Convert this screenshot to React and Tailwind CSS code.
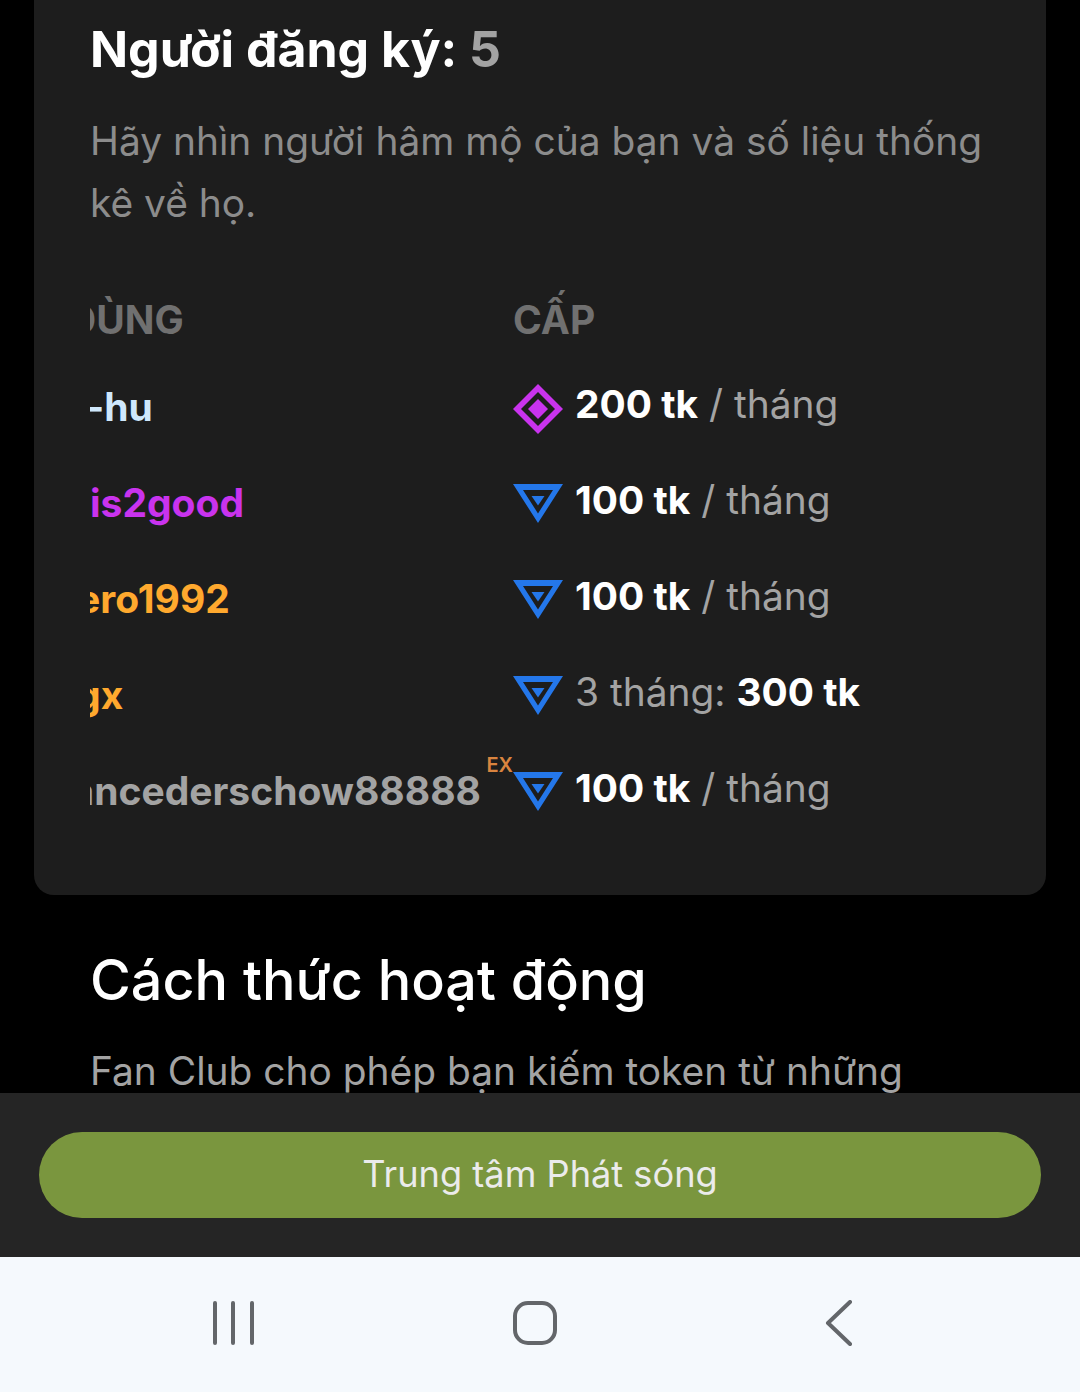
const rows = [
  { name: '-hu', color: 'text-[#cfe8fc]', shift: '-ml-[4px]', tier: 'diamond' },
  { name: 'is2good', color: 'text-[#c933ee]', shift: 'ml-0', tier: 'tri' },
  { name: 'ero1992', color: 'text-[#ffa92e]', shift: '-ml-[13px]', tier: 'tri' },
  { name: 'gx', color: 'text-[#ffa92e]', shift: '-ml-[14px]', tier: 'tri3' },
  { name: 'lancederschow88888', color: 'text-[#a3a3a3]', shift: '-ml-[29px]', tier: 'tri', ex: true },
]

function Diamond() {
  return (
    <svg width="50" height="50" viewBox="0 0 50 50" className="shrink-0 mt-[10px]">
      <path fillRule="evenodd" d="M25 0 50 25 25 50 0 25ZM25 8 8 25 25 42 42 25Z" fill="#c933ee" />
      <path d="M25 15 35 25 25 35 15 25Z" fill="#c933ee" />
    </svg>
  )
}

function Triangle() {
  return (
    <svg width="50" height="40" viewBox="0 0 50 40" className="shrink-0 mt-[7px]">
      <path fillRule="evenodd" d="M0 0H50L25 39ZM10 6 25 29.500 40 6Z" fill="#2477ea" />
      <path d="M18.500 12H31.500L25 21.500Z" fill="#2477ea" />
    </svg>
  )
}

function Price({ row }) {
  if (row.tier === 'tri3') {
    return (
      <span className="text-[38.900px] text-[#a3a3a3]">
        3 tháng: <b className="font-bold text-white">300 tk</b>
      </span>
    )
  }
  return (
    <span className="text-[38.900px] text-[#a3a3a3] pt-px">
      <b className="font-bold text-white">{row.tier === 'diamond' ? '200' : '100'} tk</b> / tháng
    </span>
  )
}

export default function App() {
  return (
    <div className="h-[1392px] flex flex-col bg-black overflow-hidden font-['Inter',sans-serif]">
      <div className="flex-1 overflow-hidden">
        <div className="mx-[34px] h-[895px] bg-[#1d1d1d] rounded-b-[20px] pl-[56px] pr-[50px] pt-[16px]">
          <h1 className="text-[50px] leading-[66px] font-bold text-white">
            Người đăng ký: <span className="text-[#a3a3a3]">5</span>
          </h1>
          <p className="mt-[28px] text-[38.900px] leading-[62px] text-[#8c8c8c] w-[910px]">
            Hãy nhìn người hâm mộ của bạn và số liệu thống kê về họ.
          </p>
          <div className="mt-[55px] mb-[5px] flex h-[62px] items-center text-[39px] font-bold text-[#707070]">
            <div className="w-[423px] overflow-hidden whitespace-nowrap">
              <span className="block -ml-[160px]">NGƯỜI DÙNG</span>
            </div>
            <div>CẤP</div>
          </div>
          {rows.map(row => (
            <div key={row.name} className="flex h-[96px] items-center">
              <div className="relative w-[423px]">
                <div className="w-[392px] overflow-hidden whitespace-nowrap text-[39px] font-bold pt-[6px]">
                  <span className={`block ${row.shift} ${row.color}`}>{row.name}</span>
                </div>
                {row.ex && (
                  <span className="absolute right-0 -top-[6px] text-[20px] font-semibold text-[#d9843f]">EX</span>
                )}
              </div>
              <div className="w-[62px] flex">
                {row.tier === 'diamond' ? <Diamond /> : <Triangle />}
              </div>
              <Price row={row} />
            </div>
          ))}
        </div>
        <div className="px-[90px] pt-[49px]">
          <h2 className="text-[55.700px] leading-[72px] font-medium text-white">Cách thức hoạt động</h2>
          <p className="mt-[24px] text-[38.900px] leading-[62px] text-[#a3a3a3]">
            Fan Club cho phép bạn kiếm token từ những
          </p>
        </div>
      </div>
      <div className="h-[164px] shrink-0 bg-[#252525] px-[39px] pt-[39px]">
        <button className="w-full h-[86px] rounded-full bg-[#7a963e] pb-[2px] text-[36.200px] text-[#ebebeb]">
          Trung tâm Phát sóng
        </button>
      </div>
      <div className="h-[135px] shrink-0 bg-[#f5f9fd] flex items-center pl-[211px] pb-[4px]">
        <svg width="44" height="46" viewBox="0 0 44 46" fill="none" stroke="#63666a" strokeWidth="4" strokeLinecap="round">
          <path d="M4 3V43M22 3V43M41 3V43" />
        </svg>
        <svg width="46" height="46" viewBox="0 0 46 46" fill="none" stroke="#63666a" strokeWidth="4" className="ml-[257px]">
          <rect x="3" y="3" width="40" height="40" rx="13" />
        </svg>
        <svg width="28" height="46" viewBox="0 0 28 46" fill="none" stroke="#63666a" strokeWidth="4" strokeLinecap="round" strokeLinejoin="round" className="ml-[267px]">
          <path d="M25 2 3 23 25 44" />
        </svg>
      </div>
    </div>
  )
}
